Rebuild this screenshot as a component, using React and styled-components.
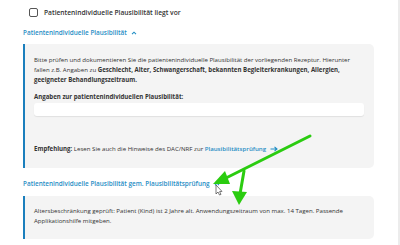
import React from "react";
import styled, { createGlobalStyle } from "styled-components";

const Global = createGlobalStyle`
  html, body {
    margin: 0;
    padding: 0;
    background: #ffffff;
  }
  body {
    font-family: "Open Sans", "Noto Sans", sans-serif;
    color: #333333;
  }
`;

const Page = styled.div`
  position: relative;
  width: 400px;
  height: 245px;
  overflow: hidden;
  box-sizing: border-box;
  padding: 7px 24px 0 23px;
  border-right: 2px solid #ececec;
`;

const CheckRow = styled.label`
  display: flex;
  align-items: center;
  gap: 6px;
  padding-left: 6px;
  height: 11px;
  font-size: 6.7px;
  font-weight: 600;
  color: #333;
`;

const Box = styled.span`
  width: 7px;
  height: 7px;
  border: 1px solid #555;
  border-radius: 2px;
  background: #fff;
`;

const Toggle = styled.div`
  display: flex;
  align-items: center;
  gap: 4px;
  margin-top: ${({ $top }) => $top}px;
  height: 11px;
  font-size: 6.4px;
  font-weight: 600;
  color: #1f8dc4;
`;

const Panel = styled.div`
  margin-top: ${({ $top }) => $top}px;
  height: ${({ $height }) => $height}px;
  box-sizing: border-box;
  background: #f4f4f4;
  border-left: 2px solid #1b7fbd;
  border-radius: 0 5px 5px 0;
  padding: ${({ $pad }) => $pad};
  font-size: 6.1px;
  line-height: 10px;
  display: flex;
  flex-direction: column;
`;

const Text = styled.p`
  margin: 0;
  b {
    font-weight: 700;
  }
`;

const Label = styled.div`
  margin-top: 7px;
  font-weight: 700;
`;

const Input = styled.div`
  margin-top: 1px;
  height: 13px;
  background: #fff;
  border-radius: 3px;
  box-shadow: 0 1px 1px rgba(0, 0, 0, 0.08);
`;

const Hint = styled.p`
  margin: auto 0 0;
  display: flex;
  align-items: center;
  gap: 4px;
  b {
    font-weight: 700;
  }
`;

const Link = styled.span`
  color: #1f8dc4;
  font-weight: 600;
`;

const Overlay = styled.svg`
  position: absolute;
  left: 0;
  top: 0;
  pointer-events: none;
`;

const Caret = () => (
  <svg width="6" height="4" viewBox="0 0 6 4">
    <path d="M1 3.2 L3 1.2 L5 3.2" fill="none" stroke="#1f8dc4" strokeWidth="1.1" />
  </svg>
);

const Arrow = () => (
  <svg width="8" height="6" viewBox="0 0 8 6">
    <path d="M0.5 3 H7 M4.5 0.8 L7 3 L4.5 5.2" fill="none" stroke="#1f8dc4" strokeWidth="1.1" />
  </svg>
);

export default function App() {
  return (
    <>
      <Global />
      <Page>
        <CheckRow>
          <Box />
          Patientenindividuelle Plausibilität liegt vor
        </CheckRow>
        <Toggle $top={9}>
          Patientenindividuelle Plausibilität <Caret />
        </Toggle>
        <Panel $top={6} $height={124} $pad="11px 10px 14px 9px">
          <Text>
            Bitte prüfen und dokumentieren Sie die patientenindividuelle Plausibilität der vorliegenden Rezeptur. Hierunter
            fallen z.B. Angaben zu <b>Geschlecht, Alter, Schwangerschaft, bekannten Begleiterkrankungen, Allergien,
            geeigneter Behandlungszeitraum.</b>
          </Text>
          <Label>Angaben zur patientenindividuellen Plausibilität:</Label>
          <Input />
          <Hint>
            <span>
              <b>Empfehlung:</b> Lesen Sie auch die Hinweise des DAC/NRF zur <Link>Plausibilitätsprüfung</Link>
            </span>
            <Arrow />
          </Hint>
        </Panel>
        <Toggle $top={10}>
          Patientenindividuelle Plausibilität gem. Plausibilitätsprüfung <Caret />
        </Toggle>
        <Panel $top={7} $height={43} $pad="10px 10px 8px 9px">
          <Text>
            Altersbeschränkung geprüft: Patient (Kind) ist 2 Jahre alt. Anwendungszeitraum von max. 14 Tagen. Passende
            Applikationshilfe mitgeben.
          </Text>
        </Panel>
        <Overlay width="400" height="245" viewBox="0 0 400 245">
          <g stroke="#2bcc10" strokeWidth="3" strokeLinecap="round" fill="none">
            <path d="M310 136 L224 179" />
            <path d="M244 171 L240 194" />
          </g>
          <g fill="#2bcc10">
            <path d="M213 184 L225 171 L230 184 Z" />
            <path d="M239 205 L232 191 L247 192 Z" />
          </g>
          <path
            d="M216 185 L216 194 L218 192 L219.5 195 L221 194.4 L219.6 191.6 L222 191.4 Z"
            fill="#fff"
            stroke="#444"
            strokeWidth="0.7"
          />
        </Overlay>
      </Page>
    </>
  );
}
